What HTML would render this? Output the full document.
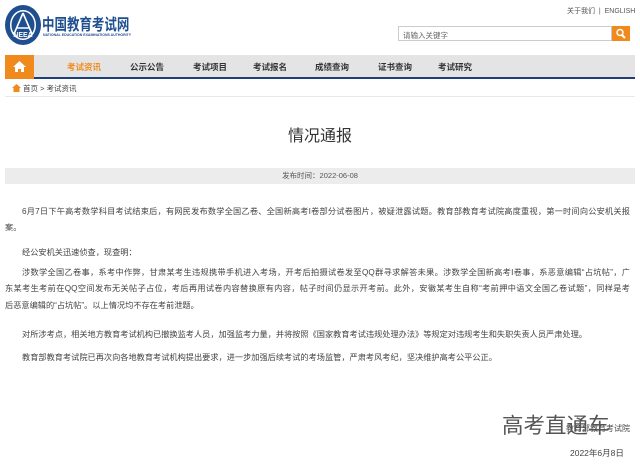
<!DOCTYPE html>
<html><head><meta charset="utf-8"><style>
*{margin:0;padding:0;box-sizing:border-box}
body{width:640px;height:464px;background:#fff;position:relative;overflow:hidden;font-family:"Liberation Sans","Noto Sans CJK SC",sans-serif;color:#333}
.a{position:absolute;white-space:nowrap}
.nav{position:absolute;left:5px;top:55px;width:630px;height:24px;background:#e4e4e4;border-bottom:2px solid #1e3f7a}
.nav span{position:absolute;top:6px;font-size:8.5px;font-weight:bold;color:#333;transform:translateX(-50%)}
.p{position:absolute;font-size:8.2px;color:#444;white-space:nowrap;overflow:hidden;height:13px;line-height:13px}
.j{white-space:normal;text-align:justify;text-align-last:justify}
</style></head><body>
<svg class="a" style="left:4px;top:4px" width="38" height="42" viewBox="0 0 38 42">
<ellipse cx="19" cy="21" rx="18" ry="20" fill="#1f4f8f"/>
<ellipse cx="19" cy="21" rx="13" ry="15" fill="#fff"/>
<ellipse cx="19" cy="21" rx="11.5" ry="13.5" fill="#1f4f8f"/>
<path d="M19 9 L10 30 M19 9 L28 30 M12 24 H26" stroke="#fff" stroke-width="1.6" fill="none"/>
<text x="19" y="33" font-size="7" fill="#fff" text-anchor="middle" font-family="Liberation Sans" font-weight="bold">NEEA</text>
</svg>
<div class="a" style="left:42px;top:11px;font-size:16px;font-weight:bold;color:#1f4f8f;transform:scaleX(0.78);transform-origin:0 0">中国教育考试网</div>
<div class="a" style="left:43px;top:33px;font-size:3.5px;font-weight:bold;color:#1f4f8f">NATIONAL EDUCATION EXAMINATIONS AUTHORITY</div>
<div class="a" style="left:567px;top:6px;font-size:7px;color:#555">关于我们 &nbsp;| &nbsp;ENGLISH</div>
<div class="a" style="left:398px;top:26px;width:214px;height:15px;border:1px solid #ccc;font-size:7.5px;color:#666;padding:3px 4px">请输入关键字</div>
<div class="a" style="left:612px;top:26px;width:18px;height:15px;background:#f08a1c"><svg width="18" height="15"><circle cx="8" cy="6.5" r="3" stroke="#fff" stroke-width="1.5" fill="none"/><path d="M10 9 L13 12" stroke="#fff" stroke-width="2"/></svg></div>
<div class="nav">
<div class="a" style="left:0;top:0;width:29px;height:24px;background:#f08a1c"><svg width="29" height="24"><path d="M14.5 6 L8 12 H10 V17 H13 V14 H16 V17 H19 V12 H21 Z" fill="#fff"/></svg></div>
<span style="left:79px;color:#f08a1c">考试资讯</span>
<span style="left:142px">公示公告</span>
<span style="left:205px">考试项目</span>
<span style="left:265px">考试报名</span>
<span style="left:327px">成绩查询</span>
<span style="left:390px">证书查询</span>
<span style="left:450px">考试研究</span>
</div>
<svg class="a" style="left:12px;top:84px" width="9" height="8"><path d="M4.5 0 L0 4 H1.5 V8 H7.5 V4 H9 Z" fill="#f08a1c"/></svg>
<div class="a" style="left:23px;top:83px;font-size:7.5px;color:#444">首页 &gt; 考试资讯</div>
<div class="a" style="left:5px;top:96px;width:630px;height:1px;background:#e8e8e8"></div>
<div class="a" style="left:0;width:640px;top:122px;text-align:center;font-size:16px;color:#333">情况通报</div>
<div class="a" style="left:5px;top:168px;width:630px;height:16px;background:#ececec;font-size:7.5px;color:#555;text-align:center;line-height:16px">发布时间：2022-06-08</div>
<div class="p j" style="left:22px;width:608px;top:205px">6月7日下午高考数学科目考试结束后，有网民发布数学全国乙卷、全国新高考I卷部分试卷图片，被疑泄露试题。教育部教育考试院高度重视，第一时间向公安机关报</div>
<div class="p" style="left:5px;top:221px">案。</div>
<div class="p" style="left:22px;top:246px">经公安机关迅速侦查，现查明：</div>
<div class="p j" style="left:22px;width:608px;top:266px">涉数学全国乙卷事，系考中作弊，甘肃某考生违规携带手机进入考场，开考后拍摄试卷发至QQ群寻求解答未果。涉数学全国新高考I卷事，系恶意编辑“占坑帖”，广</div>
<div class="p j" style="left:5px;width:625px;top:282px">东某考生考前在QQ空间发布无关帖子占位，考后再用试卷内容替换原有内容，帖子时间仍显示开考前。此外，安徽某考生自称“考前押中语文全国乙卷试题”，同样是考</div>
<div class="p" style="left:5px;top:299px">后恶意编辑的“占坑帖”。以上情况均不存在考前泄题。</div>
<div class="p" style="left:22px;top:328px">对所涉考点，相关地方教育考试机构已撤换监考人员，加强监考力量，并将按照《国家教育考试违规处理办法》等规定对违规考生和失职失责人员严肃处理。</div>
<div class="p" style="left:22px;top:351px">教育部教育考试院已再次向各地教育考试机构提出要求，进一步加强后续考试的考场监管，严肃考风考纪，坚决维护高考公平公正。</div>
<div class="a" style="left:566px;top:423px;font-size:8px;color:#444">教育部教育考试院</div>
<div class="a" style="left:502px;top:409px;font-size:21.5px;color:#555">高考直通车</div>
<div class="a" style="left:570px;top:447px;font-size:8.5px;color:#444">2022年6月8日</div>
</body></html>
